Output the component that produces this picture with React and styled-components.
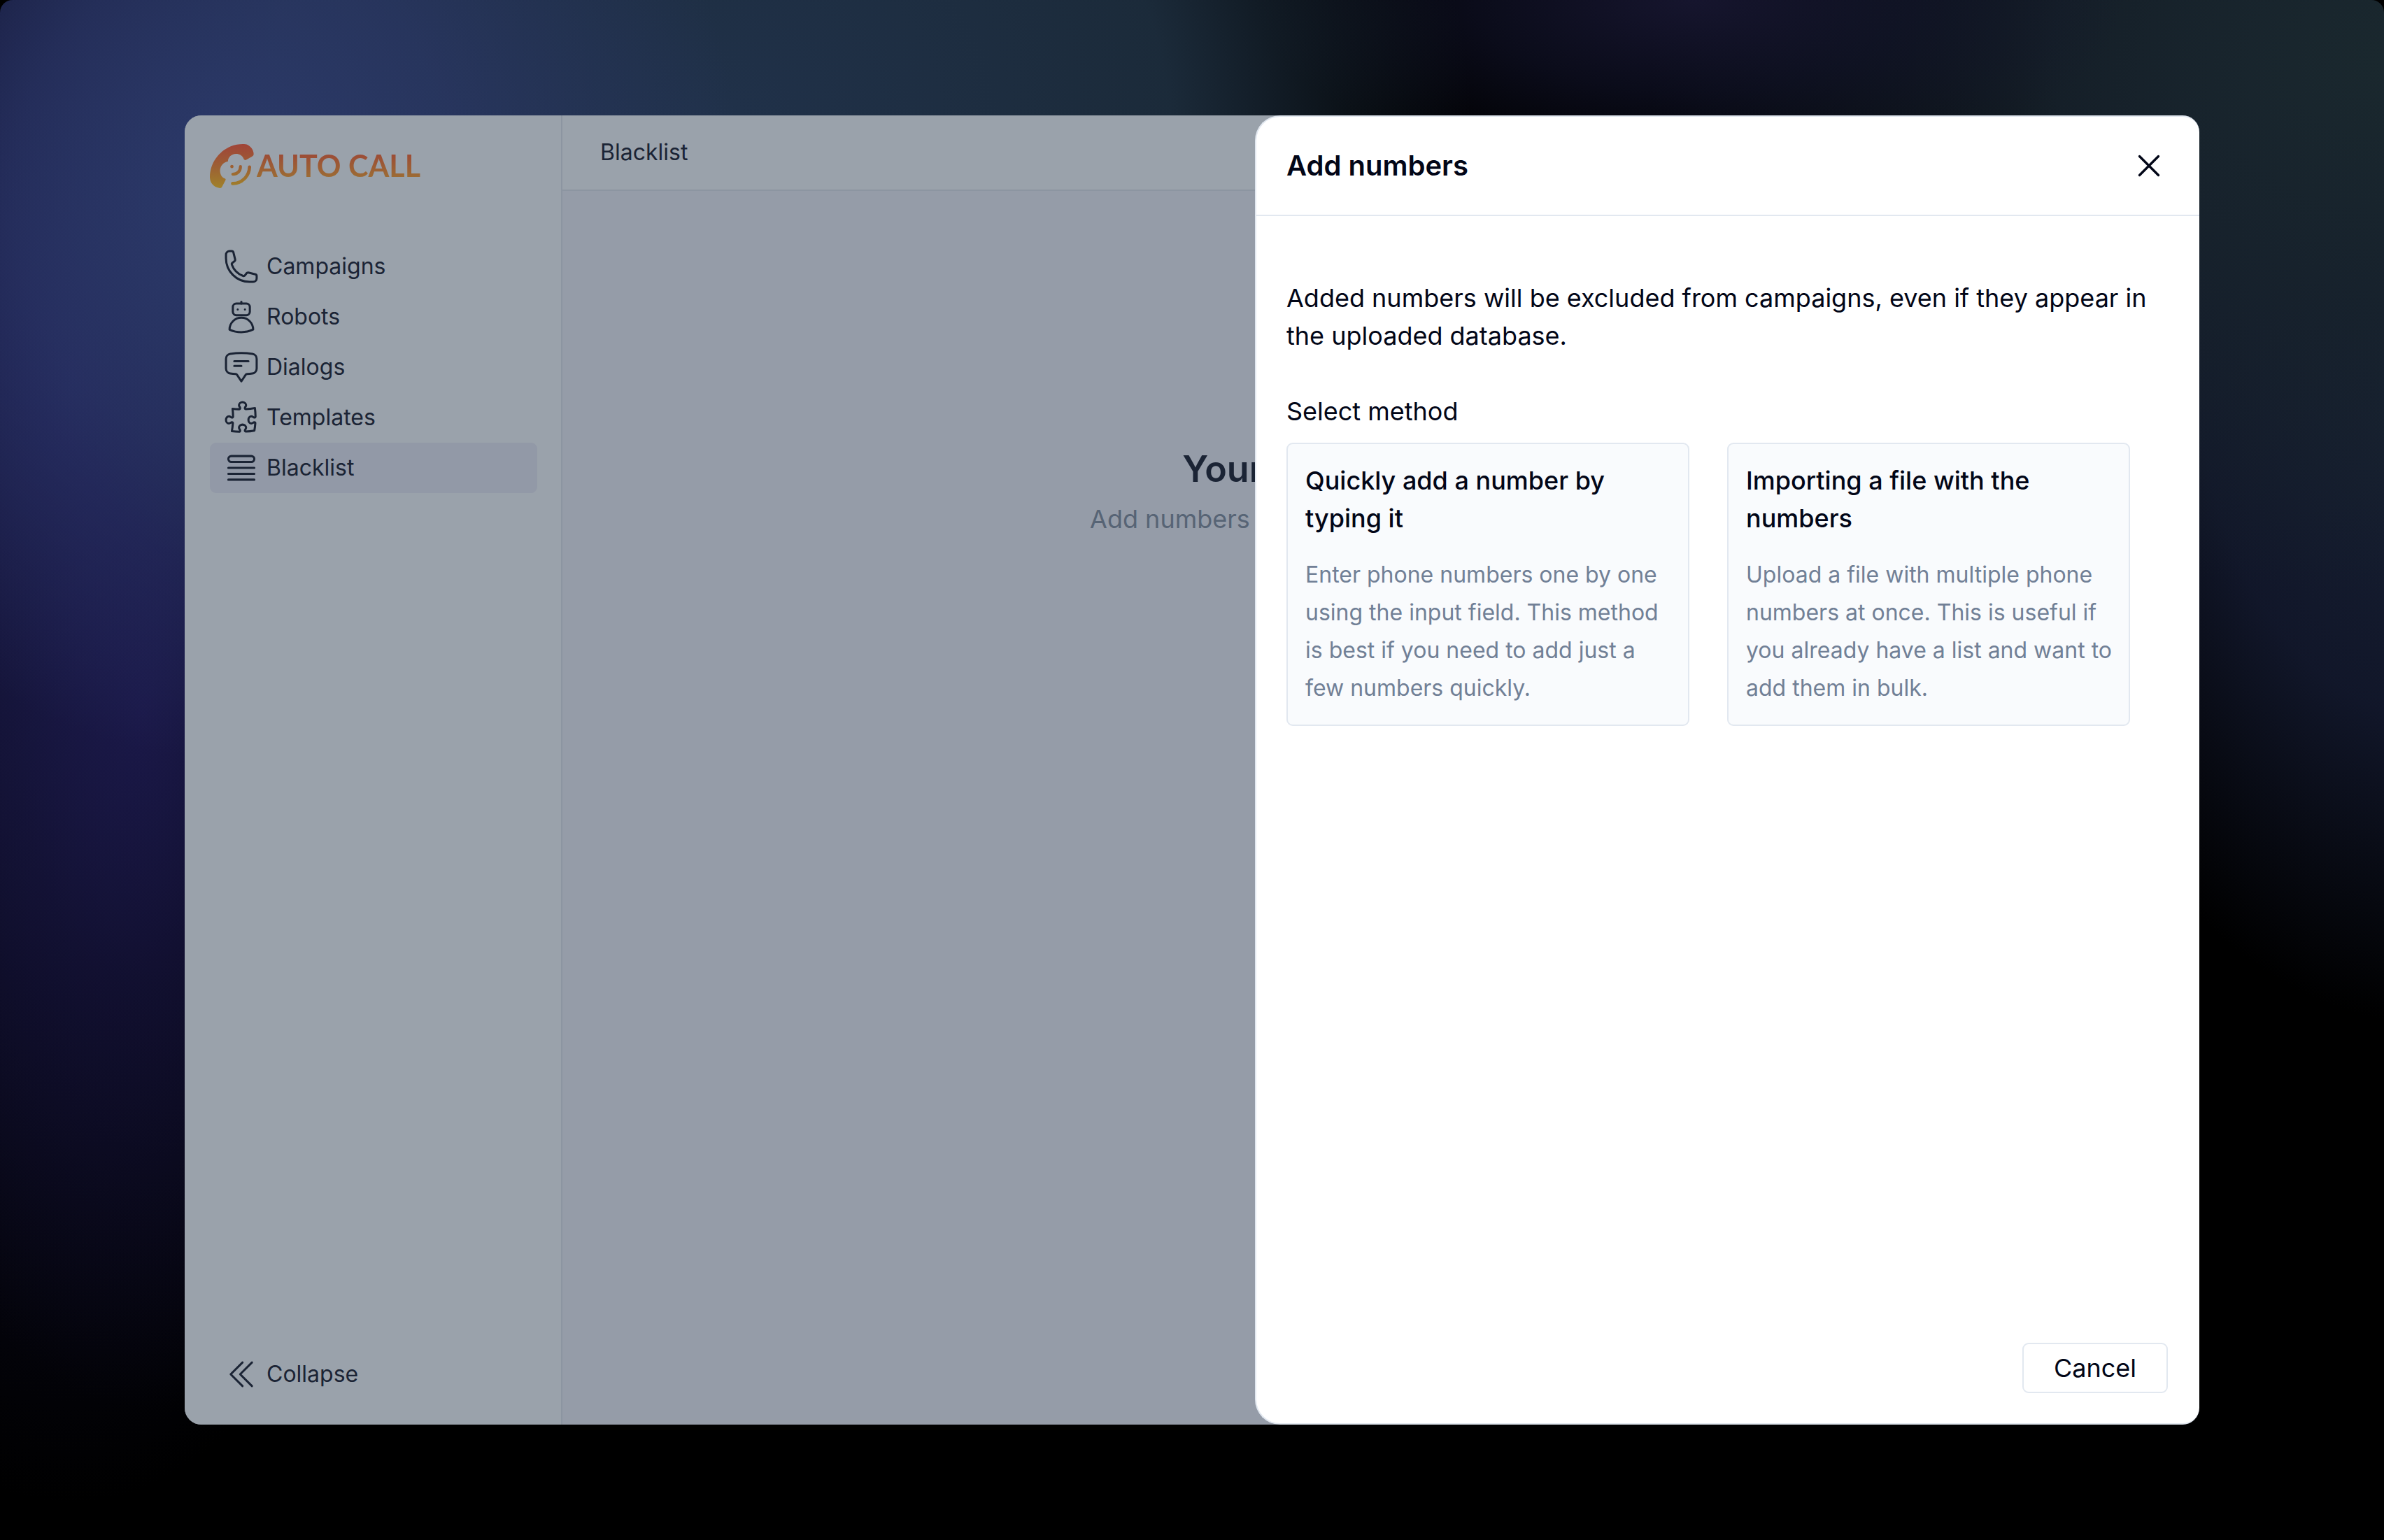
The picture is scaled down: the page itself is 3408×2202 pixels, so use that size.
import React from "react";
import styled, { createGlobalStyle } from "styled-components";
import {
  HiOutlinePhone,
  HiOutlineChatBubbleBottomCenterText,
  HiOutlinePuzzlePiece,
  HiOutlineQueueList,
  HiOutlineChevronDoubleLeft,
  HiOutlineXMark,
} from "react-icons/hi2";

const color = {
  ink: "#020617",
  muted: "#718096",
  line: "#e2e8f0",
  cardFill: "#f9fbfd",
  dimSurface: "#9aa2ab",
  dimCanvas: "#959ca8",
  dimActive: "#9299a7",
  dimLine: "#8c95a1",
  dimInk: "#1b2435",
  dimMuted: "#576475",
};

const GlobalStyle = createGlobalStyle`
  *, *::before, *::after { box-sizing: border-box; }
  body {
    margin: 0;
    background: #000;
    color: ${color.ink};
    font-family: Inter, "Liberation Sans", sans-serif;
    font-size: 36px;
    line-height: 54px;
  }
  h1, h2, h3, p, ul { margin: 0; padding: 0; }
  button { font: inherit; color: inherit; cursor: pointer; }
`;

const Backdrop = styled.div`
  display: flex;
  min-height: 100vh;
  padding: 165px 264px;
  border-radius: 18px;
  background:
    radial-gradient(ellipse 720px 800px at 10% 13%, rgba(46, 60, 112, 0.9), rgba(46, 58, 112, 0.6) 45%, transparent),
    radial-gradient(ellipse 1080px 900px at 30% 8%, rgba(34, 52, 78, 0.95), rgba(32, 50, 68, 0.85) 60%, transparent),
    radial-gradient(ellipse 460px 1000px at 6% 46%, rgba(32, 28, 86, 0.65), rgba(28, 24, 74, 0.4) 40%, transparent),
    radial-gradient(ellipse 640px 1600px at 3% 25%, rgba(30, 34, 84, 0.9), rgba(20, 20, 60, 0.5) 55%, transparent),
    radial-gradient(ellipse 620px 260px at 71% 0%, rgba(23, 22, 48, 0.95), rgba(18, 20, 44, 0.6) 50%, transparent),
    radial-gradient(ellipse 1050px 760px at 100% 4%, #1a282e, rgba(23, 34, 44, 0.9) 45%, transparent),
    radial-gradient(ellipse 620px 980px at 102% 22%, #182234, rgba(19, 25, 46, 0.9) 55%, transparent),
    #000;
`;

const AppWindow = styled.div`
  position: relative;
  display: flex;
  flex: 1;
  overflow: hidden;
  border-radius: 24px;
  background: ${color.dimCanvas};
  color: ${color.dimInk};
`;

const Sidebar = styled.aside`
  display: flex;
  flex-direction: column;
  flex: none;
  width: 540px;
  padding: 36px 34px 36px 36px;
  border-right: 2px solid ${color.dimLine};
  background: ${color.dimSurface};
`;

const Brand = styled.a`
  display: flex;
  align-items: center;
  gap: 4px;
  height: 72px;
  margin-bottom: 72px;
  color: inherit;
  text-decoration: none;
`;

const BrandMark = styled.svg`
  flex: none;
  width: 63px;
  height: 63px;
`;

const BrandName = styled.span`
  font-family: Lato, sans-serif;
  font-size: 43px;
  font-weight: 700;
  line-height: 54px;
  color: transparent;
  background: linear-gradient(#9c4c36 20%, #9c6e34 85%);
  background-clip: text;
`;

const NavList = styled.ul`
  display: flex;
  flex-direction: column;
  list-style: none;
`;

const navItem = `
  display: flex;
  align-items: center;
  gap: 9px;
  width: 100%;
  height: 72px;
  padding: 0 18px;
  border: 0;
  border-radius: 9px;
  color: inherit;
  font-size: 32px;
  text-align: left;
  text-decoration: none;

  svg {
    flex: none;
    width: 54px;
    height: 54px;
    stroke-width: 1.35;
  }
`;

const NavLink = styled.a`
  ${navItem}
  background: ${(p) => (p.$active ? color.dimActive : "transparent")};
`;

const CollapseButton = styled.button`
  ${navItem}
  margin-top: auto;
  background: transparent;
`;

const Main = styled.main`
  display: flex;
  flex-direction: column;
  flex: 1;
  min-width: 0;
`;

const TopBar = styled.header`
  display: flex;
  align-items: center;
  height: 108px;
  padding: 0 54px;
  border-bottom: 2px solid ${color.dimLine};
  background: ${color.dimSurface};
`;

const PageTitle = styled.h1`
  font-size: 32px;
  font-weight: 400;
`;

const EmptyState = styled.section`
  display: flex;
  flex-direction: column;
  align-items: center;
  gap: 8px;
  padding-top: 362px;
`;

const EmptyTitle = styled.h2`
  font-size: 52px;
  font-weight: 600;
  line-height: 72px;
`;

const EmptyText = styled.p`
  color: ${color.dimMuted};
`;

const Drawer = styled.section`
  position: absolute;
  top: 0;
  right: 0;
  bottom: 0;
  display: flex;
  flex-direction: column;
  width: 1350px;
  max-width: 100%;
  border: 2px solid ${color.line};
  border-right: 0;
  border-radius: 36px 24px 24px 36px;
  background: #fff;
  color: ${color.ink};
`;

const DrawerHeader = styled.header`
  display: flex;
  align-items: center;
  justify-content: space-between;
  height: 142px;
  padding: 0 45px 0 43px;
  border-bottom: 2px solid ${color.line};
`;

const DrawerTitle = styled.h2`
  font-size: 40px;
  font-weight: 600;
`;

const CloseButton = styled.button`
  display: flex;
  padding: 0;
  border: 0;
  background: none;

  svg {
    width: 54px;
    height: 54px;
  }
`;

const DrawerBody = styled.div`
  display: flex;
  flex-direction: column;
  flex: 1;
  gap: 54px;
  padding: 90px 45px 45px 43px;
`;

const Method = styled.div`
  display: flex;
  flex-direction: column;
  gap: 18px;
`;

const MethodLabel = styled.h3`
  font-size: 36px;
  font-weight: 400;
`;

const MethodGrid = styled.div`
  display: grid;
  grid-template-columns: 1fr 1fr;
  gap: 54px;
  padding-right: 54px;
`;

const MethodCard = styled.button`
  display: flex;
  flex-direction: column;
  gap: 27px;
  padding: 25px 18px 25px 25px;
  border: 2px solid ${color.line};
  border-radius: 9px;
  background: ${color.cardFill};
  text-align: left;
`;

const CardTitle = styled.span`
  font-weight: 500;
`;

const CardText = styled.span`
  color: ${color.muted};
  font-size: 32px;
`;

const DrawerFooter = styled.footer`
  display: flex;
  justify-content: flex-end;
  padding: 0 45px 43px;
`;

const CancelButton = styled.button`
  height: 72px;
  padding: 0 43px;
  border: 2px solid ${color.line};
  border-radius: 9px;
  background: #fff;
`;

function RobotIcon() {
  return (
    <svg viewBox="0 0 24 24" fill="none" stroke="currentColor" strokeLinecap="round" strokeLinejoin="round" aria-hidden="true">
      <path d="M12 2.4v1.2" />
      <rect x="6.6" y="3.6" width="10.8" height="7.4" rx="2.2" />
      <path d="M9.7 7.3h.01M14.3 7.3h.01" />
      <path d="M4.5 20.1a7.5 7.5 0 0 1 15 0A17.9 17.9 0 0 1 12 21.75c-2.68 0-5.22-.58-7.5-1.63Z" />
    </svg>
  );
}

function Logo() {
  return (
    <BrandMark viewBox="30 30 190 190" fill="none" aria-hidden="true">
      <defs>
        <linearGradient id="brand" gradientUnits="userSpaceOnUse" x1="0" y1="30" x2="0" y2="220">
          <stop offset="0" stopColor="#a04438" />
          <stop offset="0.5" stopColor="#9c5f34" />
          <stop offset="1" stopColor="#a0822a" />
        </linearGradient>
      </defs>
      <path
        fill="url(#brand)"
        d="M74 220C55 218 30 205 30 172C31 112 68 62 120 40C145 29 182 28 192 33C210 43 219 58 219 74Q219 81 211 84L184 99C180 99 176 96 175 92C170 79 158 72 143 72C122 72 108 88 108 105C87 109 73 127 74 147C75 164 83 175 96 179Q100 182 97 187L83 213Q80 220 74 220Z"
      />
      <circle cx="125" cy="127" r="7" fill="url(#brand)" />
      <path d="M129 160C148 160 162 147 162 127" stroke="url(#brand)" strokeWidth="13" strokeLinecap="round" />
      <path d="M128 200C167 201 200 168 201 129" stroke="url(#brand)" strokeWidth="14" strokeLinecap="round" />
    </BrandMark>
  );
}

const navigation = [
  { label: "Campaigns", Icon: HiOutlinePhone },
  { label: "Robots", Icon: RobotIcon },
  { label: "Dialogs", Icon: HiOutlineChatBubbleBottomCenterText },
  { label: "Templates", Icon: HiOutlinePuzzlePiece },
  { label: "Blacklist", Icon: HiOutlineQueueList, active: true },
];

const methods = [
  {
    title: "Quickly add a number by typing it",
    text: "Enter phone numbers one by one using the input field. This method is best if you need to add just a few numbers quickly.",
  },
  {
    title: "Importing a file with the numbers",
    text: "Upload a file with multiple phone numbers at once. This is useful if you already have a list and want to add them in bulk.",
  },
];

export default function App() {
  return (
    <>
      <GlobalStyle />
      <Backdrop>
        <AppWindow>
          <Sidebar>
            <Brand href="#">
              <Logo />
              <BrandName>AUTO CALL</BrandName>
            </Brand>
            <nav>
              <NavList>
                {navigation.map(({ label, Icon, active }) => (
                  <li key={label}>
                    <NavLink href="#" $active={active} aria-current={active ? "page" : undefined}>
                      <Icon />
                      {label}
                    </NavLink>
                  </li>
                ))}
              </NavList>
            </nav>
            <CollapseButton type="button">
              <HiOutlineChevronDoubleLeft />
              Collapse
            </CollapseButton>
          </Sidebar>

          <Main>
            <TopBar>
              <PageTitle>Blacklist</PageTitle>
            </TopBar>
            <EmptyState>
              <EmptyTitle>Your blacklist is empty</EmptyTitle>
              <EmptyText>Add numbers to prevent these from being called.</EmptyText>
            </EmptyState>
          </Main>

          <Drawer role="dialog" aria-labelledby="drawer-title">
            <DrawerHeader>
              <DrawerTitle id="drawer-title">Add numbers</DrawerTitle>
              <CloseButton type="button" aria-label="Close">
                <HiOutlineXMark />
              </CloseButton>
            </DrawerHeader>
            <DrawerBody>
              <p>Added numbers will be excluded from campaigns, even if they appear in the uploaded database.</p>
              <Method>
                <MethodLabel>Select method</MethodLabel>
                <MethodGrid>
                  {methods.map(({ title, text }) => (
                    <MethodCard key={title} type="button">
                      <CardTitle>{title}</CardTitle>
                      <CardText>{text}</CardText>
                    </MethodCard>
                  ))}
                </MethodGrid>
              </Method>
            </DrawerBody>
            <DrawerFooter>
              <CancelButton type="button">Cancel</CancelButton>
            </DrawerFooter>
          </Drawer>
        </AppWindow>
      </Backdrop>
    </>
  );
}
